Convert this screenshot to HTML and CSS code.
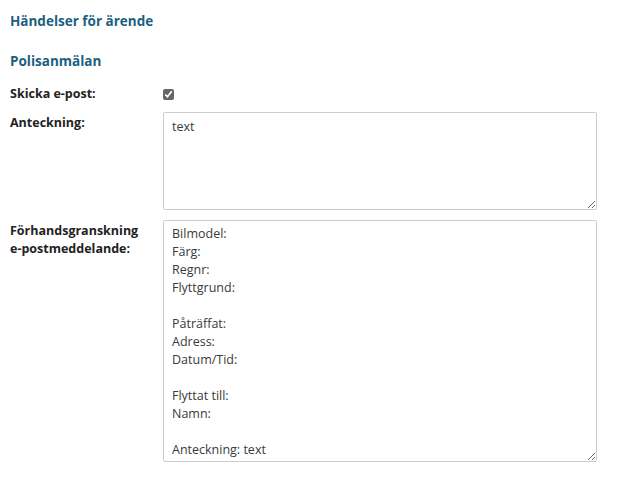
FILE: index.html
```html
<!DOCTYPE html>
<html lang="sv">
<head>
<meta charset="utf-8">
<link rel="stylesheet" href="styles.css">
</head>
<body>
<div class="page">
  <h2 class="title">Händelser för ärende</h2>
  <h3 class="subtitle">Polisanmälan</h3>
  <div class="form">
    <label class="lbl lbl-check">Skicka e-post:</label>
    <div class="field check-field"><input type="checkbox" class="chk" checked></div>
    <label class="lbl">Anteckning:</label>
    <div class="field"><textarea class="ta ta-note">text</textarea></div>
    <label class="lbl">Förhandsgranskning e-postmeddelande:</label>
    <div class="field"><textarea class="ta ta-preview">Bilmodel:
Färg:
Regnr:
Flyttgrund:

Påträffat:
Adress:
Datum/Tid:

Flyttat till:
Namn:

Anteckning: text</textarea></div>
  </div>
</div>
</body>
</html>
```

FILE: styles.css
```css
html, body {
  margin: 0;
  padding: 0;
  background: #fff;
}
.page {
  padding: 12px 10px 10px 10px;
  font-family: "Open Sans", "Noto Sans", sans-serif;
  font-size: 13px;
  color: #333;
}
.title {
  margin: 0;
  font-size: 13.5px;
  font-weight: 700;
  color: #1b5f7f;
  line-height: 18px;
}
.subtitle {
  margin: 22px 0 0 0;
  font-size: 13.5px;
  font-weight: 700;
  color: #1b5f7f;
  line-height: 18px;
}
.form {
  margin-top: 16px;
  display: grid;
  grid-template-columns: 153px 434px;
  row-gap: 10px;
  align-items: start;
}
.lbl {
  font-weight: 700;
  color: #222;
  font-size: 12.5px;
  line-height: 18px;
  padding-top: 2px;
  padding-right: 20px;
}
.lbl-check {
  padding-top: 0;
  line-height: 16px;
  height: 16px;
}
.check-field {
  height: 16px;
  display: flex;
  align-items: center;
}
.chk {
  margin: 0;
  width: 11px;
  height: 11px;
  accent-color: #666;
  filter: grayscale(1);
}
.ta {
  display: block;
  box-sizing: border-box;
  width: 434px;
  margin: 0;
  padding: 4px 8px;
  border: 1px solid #ccc;
  border-radius: 2px;
  font-family: "Open Sans", "Noto Sans", sans-serif;
  font-size: 12.5px;
  line-height: 18px;
  color: #3a3a3a;
  background: #fff;
  resize: both;
  outline: none;
}
.ta-note {
  height: 98px;
  padding-top: 5px;
}
.ta-preview {
  height: 242px;
  overflow: hidden;
}
```
